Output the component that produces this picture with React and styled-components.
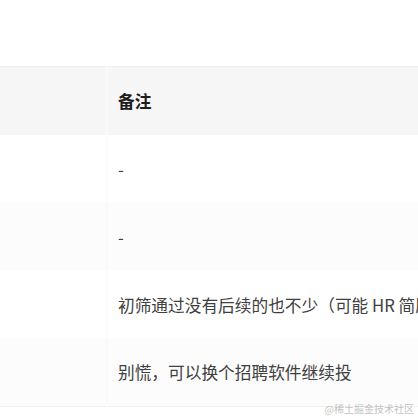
import React from 'react';
import styled, { createGlobalStyle } from 'styled-components';

const GlobalStyle = createGlobalStyle`
  html, body {
    margin: 0;
    padding: 0;
    background: #fff;
  }
  body {
    font-family: "Noto Sans CJK SC", "Noto Sans", sans-serif;
  }
`;

const Page = styled.div`
  position: relative;
  width: 418px;
  height: 418px;
  overflow: hidden;
  padding-top: 66px;
  box-sizing: border-box;
`;

const Table = styled.table`
  border-collapse: collapse;
  border-top: 1px solid #f0f0f0;
  border-bottom: 1px solid #f0f0f0;
  white-space: nowrap;
`;

const Row = styled.tr`
  background: ${p => (p.$head ? '#f6f6f6' : p.$striped ? '#fcfcfc' : '#fff')};
`;

const Cell = styled.td`
  height: 68px;
  padding: 0 10px;
  box-sizing: border-box;
  text-align: left;
  vertical-align: middle;
  font-family: "Noto Sans CJK SC", "Noto Sans", sans-serif;
  font-size: 16.7px;
  color: ${p => (p.$head ? '#1d1d1d' : '#404040')};
  font-weight: ${p => (p.$head ? 700 : 400)};
  border-left: 2px solid #fafafa;
  &:first-child {
    width: 107px;
    min-width: 107px;
    padding: 0;
    border-left: none;
  }
`;

// full-width bracket, glyph sitting on the right of its em box
const Paren = styled.span`
  display: inline-block;
  width: 1em;
  text-align: right;
`;

const Watermark = styled.div`
  position: absolute;
  right: 4px;
  bottom: 2px;
  font-size: 10px;
  color: #c4c4c4;
  font-family: "Noto Sans CJK SC", sans-serif;
`;

const rows = [
  '-',
  '-',
  <>初筛通过没有后续的也不少<Paren>（</Paren>可能 HR 简历都没细看）</>,
  '别慌，可以换个招聘软件继续投',
];

export default function App() {
  return (
    <Page>
      <GlobalStyle />
      <Table>
        <thead>
          <Row $head>
            <Cell as="th" $head></Cell>
            <Cell as="th" $head>备注</Cell>
          </Row>
        </thead>
        <tbody>
          {rows.map((text, i) => (
            <Row key={i} $striped={i % 2 === 1}>
              <Cell></Cell>
              <Cell>{text}</Cell>
            </Row>
          ))}
        </tbody>
      </Table>
      <Watermark>@稀土掘金技术社区</Watermark>
    </Page>
  );
}
